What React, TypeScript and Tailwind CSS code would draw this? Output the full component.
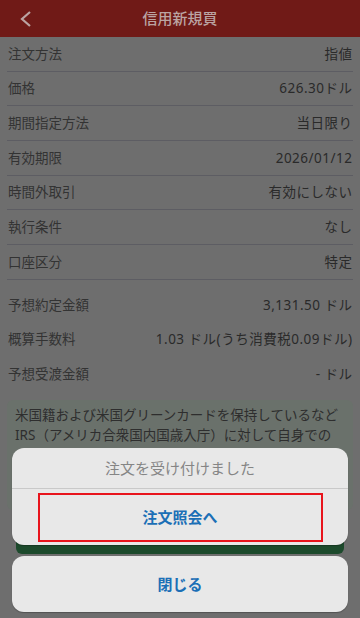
import React from "react";

const rows: { label: string; value: string }[] = [
  { label: "注文方法", value: "指値" },
  { label: "価格", value: "626.30ドル" },
  { label: "期間指定方法", value: "当日限り" },
  { label: "有効期限", value: "2026/01/12" },
  { label: "時間外取引", value: "有効にしない" },
  { label: "執行条件", value: "なし" },
  { label: "口座区分", value: "特定" },
];

const totals: { label: string; value: string }[] = [
  { label: "予想約定金額", value: "3,131.50 ドル" },
  { label: "概算手数料", value: "1.03 ドル(うち消費税0.09ドル)" },
  { label: "予想受渡金額", value: "- ドル" },
];

const font = { fontFamily: '"Noto Sans", "Noto Sans CJK JP", sans-serif' };

export default function App() {
  return (
    <div className="relative w-[360px] h-[618px] overflow-hidden bg-[#6e6e6e]" style={font}>
      {/* header */}
      <div className="relative h-[37px] bg-[#701a17] flex items-center justify-center">
        <svg className="absolute left-[19px] top-[10px]" width="14" height="18" viewBox="0 0 14 18">
          <polyline points="11,2 3,9 11,16" fill="none" stroke="#bba4a3" strokeWidth="2.2" />
        </svg>
        <span className="text-[15px] text-[#bba4a3] font-medium">信用新規買</span>
      </div>

      {/* detail rows */}
      <div className="px-[7px]">
        {rows.map((r) => (
          <div
            key={r.label}
            className="h-[34.67px] box-border border-b border-[#5d5d63] flex items-center justify-between px-px text-[13.5px]"
          >
            <span className="text-[#333]">{r.label}</span>
            <span className="text-[#2a2a2a] tracking-[0.5px] -mr-[0.5px]">{r.value}</span>
          </div>
        ))}
        <div className="mt-[8px]">
          {totals.map((r) => (
            <div key={r.label} className="h-[34.5px] flex items-center justify-between px-px text-[13.5px]">
              <span className="text-[#333]">{r.label}</span>
              <span className="text-[#2a2a2a] tracking-[0.5px] -mr-[0.5px]">{r.value}</span>
            </div>
          ))}
        </div>
        <div className="mt-[9px] rounded-md bg-[#6a716b] px-[8px] pt-[5px] pb-2 text-[13.5px] leading-[20px] text-[#2e2e2e] h-[110px]">
          <p className="whitespace-nowrap">米国籍および米国グリーンカードを保持しているなど</p>
          <p className="whitespace-nowrap">IRS（アメリカ合衆国内国歳入庁）に対して自身での</p>
        </div>
        <div className="mx-[9px] -mt-[4px] h-[48px] rounded-b-md bg-[#1c4a2c]" />
      </div>

      {/* action sheet */}
      <div className="absolute left-[12px] right-[12px] bottom-[6px] flex flex-col gap-[11px]">
        <div className="rounded-[12px] bg-[#e8e8e8] shadow-[0_1px_1px_rgba(0,0,0,0.25)] overflow-hidden">
          <div className="h-[41px] flex items-center justify-center text-[15px] text-[#858585] border-b border-[#c9c9c9]">
            注文を受け付けました
          </div>
          <div className="h-[56px] flex items-center justify-center">
            <div className="w-[285px] h-[49px] border-2 border-[#e8141c] flex items-center justify-center text-[15px] font-bold text-[#1b6fb6]">
              注文照会へ
            </div>
          </div>
        </div>
        <div className="h-[56px] rounded-[12px] bg-[#e8e8e8] shadow-[0_1px_1px_rgba(0,0,0,0.25)] flex items-center justify-center text-[15px] font-bold text-[#1b6fb6]">
          閉じる
        </div>
      </div>
    </div>
  );
}
